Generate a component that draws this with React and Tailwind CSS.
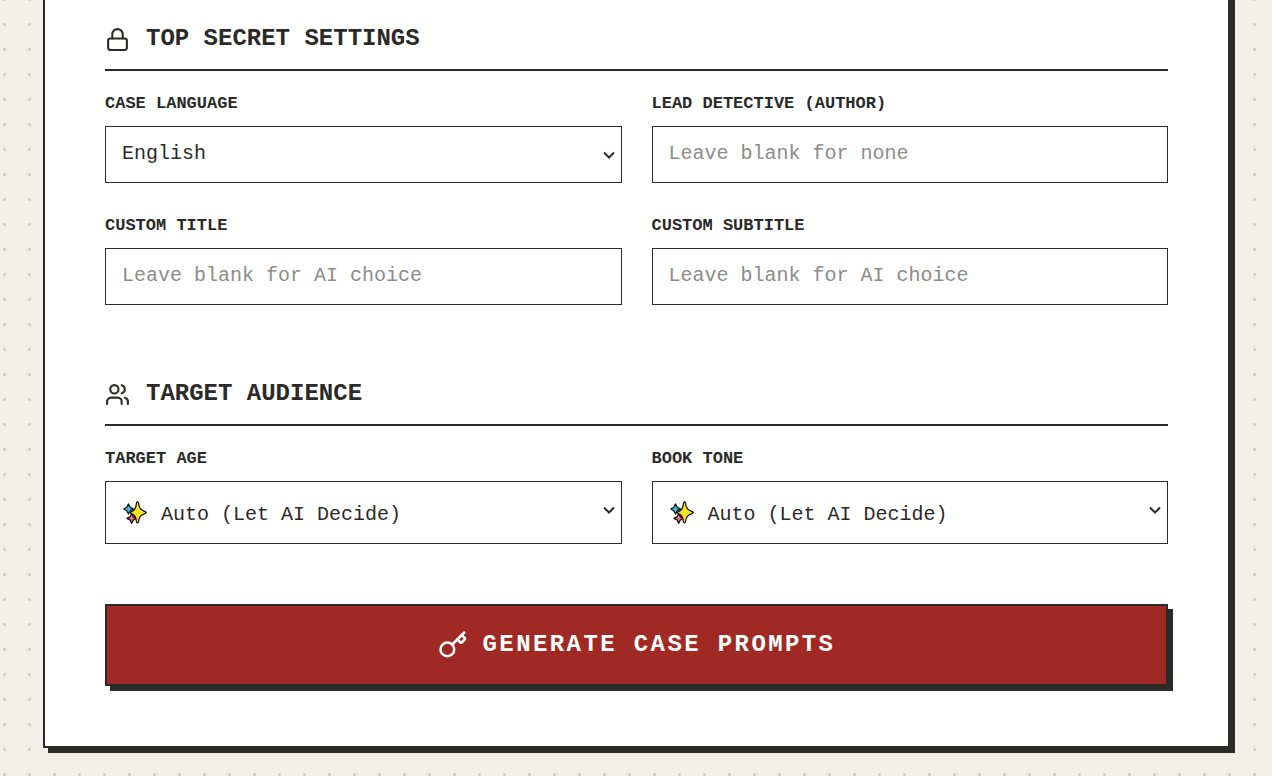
import { useState } from "react";
import { Key, Lock, Users } from "lucide-react";

const LANGUAGES = ["English", "Spanish", "French", "German"];
const AGES = ["Auto (Let AI Decide)", "Kids", "Teens", "Adults"];
const TONES = ["Auto (Let AI Decide)", "Funny", "Serious", "Mysterious"];

function Sparkles({ className }) {
  return (
    <svg viewBox="0 0 24 24" className={className} aria-hidden="true">
      <g stroke="#111" strokeWidth="1.3" strokeLinejoin="round">
        <path
          d="M5.5 3 L7.2 6.3 L10.5 8 L7.2 9.7 L5.5 13 L3.8 9.7 L0.8 8 L3.8 6.3 Z"
          fill="#3fc1e8"
        />
        <path
          d="M8.7 12.5 L10.4 15.8 L13.7 17.3 L10.4 18.9 L8.7 22.2 L7 18.9 L3.9 17.3 L7 15.8 Z"
          fill="#f56f94"
        />
        <path
          d="M14.5 1 C15 1 15.4 1.3 15.5 2 C16 7 17.5 9 22.5 10.8 C23.4 11.2 23.4 12 22.5 12.3 C17.5 14 16 16 15.5 21 C15.3 22.2 13.7 22.2 13.5 21 C13 16 12 14 8 12.3 C7.2 12 7.2 11.2 8 10.8 C12 9 13 7 13.5 2 C13.6 1.3 14 1 14.5 1 Z"
          fill="#fde51f"
        />
      </g>
    </svg>
  );
}

function SectionTitle({ icon: Icon, children }) {
  return (
    <h2 className="flex items-center gap-4 mb-[22px] pb-[15px] border-b-2 border-[#2a2a28] text-2xl/[30px] font-bold uppercase">
      <Icon size={25} strokeWidth={2} className="shrink-0" />
      {children}
    </h2>
  );
}

function Label({ id, children }) {
  return (
    <label
      htmlFor={id}
      className="block pt-px mb-3 text-[17px]/5 font-bold uppercase"
    >
      {children}
    </label>
  );
}

function TextField({ id, label, placeholder }) {
  const [value, setValue] = useState("");

  return (
    <div>
      <Label id={id}>{label}</Label>
      <input
        id={id}
        type="text"
        value={value}
        placeholder={placeholder}
        onChange={(e) => setValue(e.target.value)}
        className="block w-full h-[57px] px-4 pb-0.5 bg-white border border-[#2a2a28] text-xl placeholder:text-[#8c8c88] outline-none"
      />
    </div>
  );
}

function SelectField({ id, label, options, sparkle }) {
  const [value, setValue] = useState(options[0]);

  return (
    <div>
      <Label id={id}>{label}</Label>
      <div className="relative">
        <select
          id={id}
          value={value}
          onChange={(e) => setValue(e.target.value)}
          className={`block w-full appearance-none pr-8 bg-white border border-[#2a2a28] text-xl outline-none cursor-pointer ${
            sparkle ? "h-[63px] pt-1 pl-[55px]" : "h-[57px] pl-4 pb-0.5"
          }`}
        >
          {options.map((option) => (
            <option key={option}>{option}</option>
          ))}
        </select>
        {sparkle && (
          <Sparkles className="absolute left-[18px] top-5 w-6 h-6 pointer-events-none" />
        )}
        <svg
          viewBox="0 0 12 10"
          className="absolute right-[7px] top-6 w-3 h-2.5 pointer-events-none"
          fill="none"
          stroke="#2a2a28"
          strokeWidth="2"
          aria-hidden="true"
        >
          <path d="M1 2.5 L6 7.5 L11 2.5" />
        </svg>
      </div>
    </div>
  );
}

export default function App() {
  return (
    <div className="min-h-screen overflow-hidden pl-[43px] pr-[42px] pb-7 bg-[#f2efe9] bg-[radial-gradient(#d0cdc8_1px,transparent_2px)] bg-size-[25px_25px] bg-position-[-8px_12px] font-['Courier_New','Liberation_Mono',monospace] text-[#2a2a28]">
      <form
        onSubmit={(e) => e.preventDefault()}
        className="-mt-10 px-[60px] pt-16 pb-[60px] bg-white border-x-2 border-b-2 border-[#2a2a28] shadow-[5px_5px_0_#2a2a28]"
      >
        <section className="mb-[74px]">
          <SectionTitle icon={Lock}>Top Secret Settings</SectionTitle>
          <div className="grid grid-cols-2 gap-x-[30px] gap-y-8">
            <SelectField id="language" label="Case Language" options={LANGUAGES} />
            <TextField
              id="author"
              label="Lead Detective (Author)"
              placeholder="Leave blank for none"
            />
            <TextField
              id="title"
              label="Custom Title"
              placeholder="Leave blank for AI choice"
            />
            <TextField
              id="subtitle"
              label="Custom Subtitle"
              placeholder="Leave blank for AI choice"
            />
          </div>
        </section>

        <section className="mb-[60px]">
          <SectionTitle icon={Users}>Target Audience</SectionTitle>
          <div className="grid grid-cols-2 gap-x-[30px]">
            <SelectField id="age" label="Target Age" options={AGES} sparkle />
            <SelectField id="tone" label="Book Tone" options={TONES} sparkle />
          </div>
        </section>

        <button
          type="submit"
          className="flex w-full items-center justify-center gap-[15px] py-6 bg-[#a02a23] border-2 border-[#2a2a28] shadow-[5px_5px_0_#2a2a28] text-2xl/[30px] font-bold tracking-widest uppercase text-white cursor-pointer"
        >
          <Key size={30} strokeWidth={2} />
          Generate Case Prompts
        </button>
      </form>
    </div>
  );
}
